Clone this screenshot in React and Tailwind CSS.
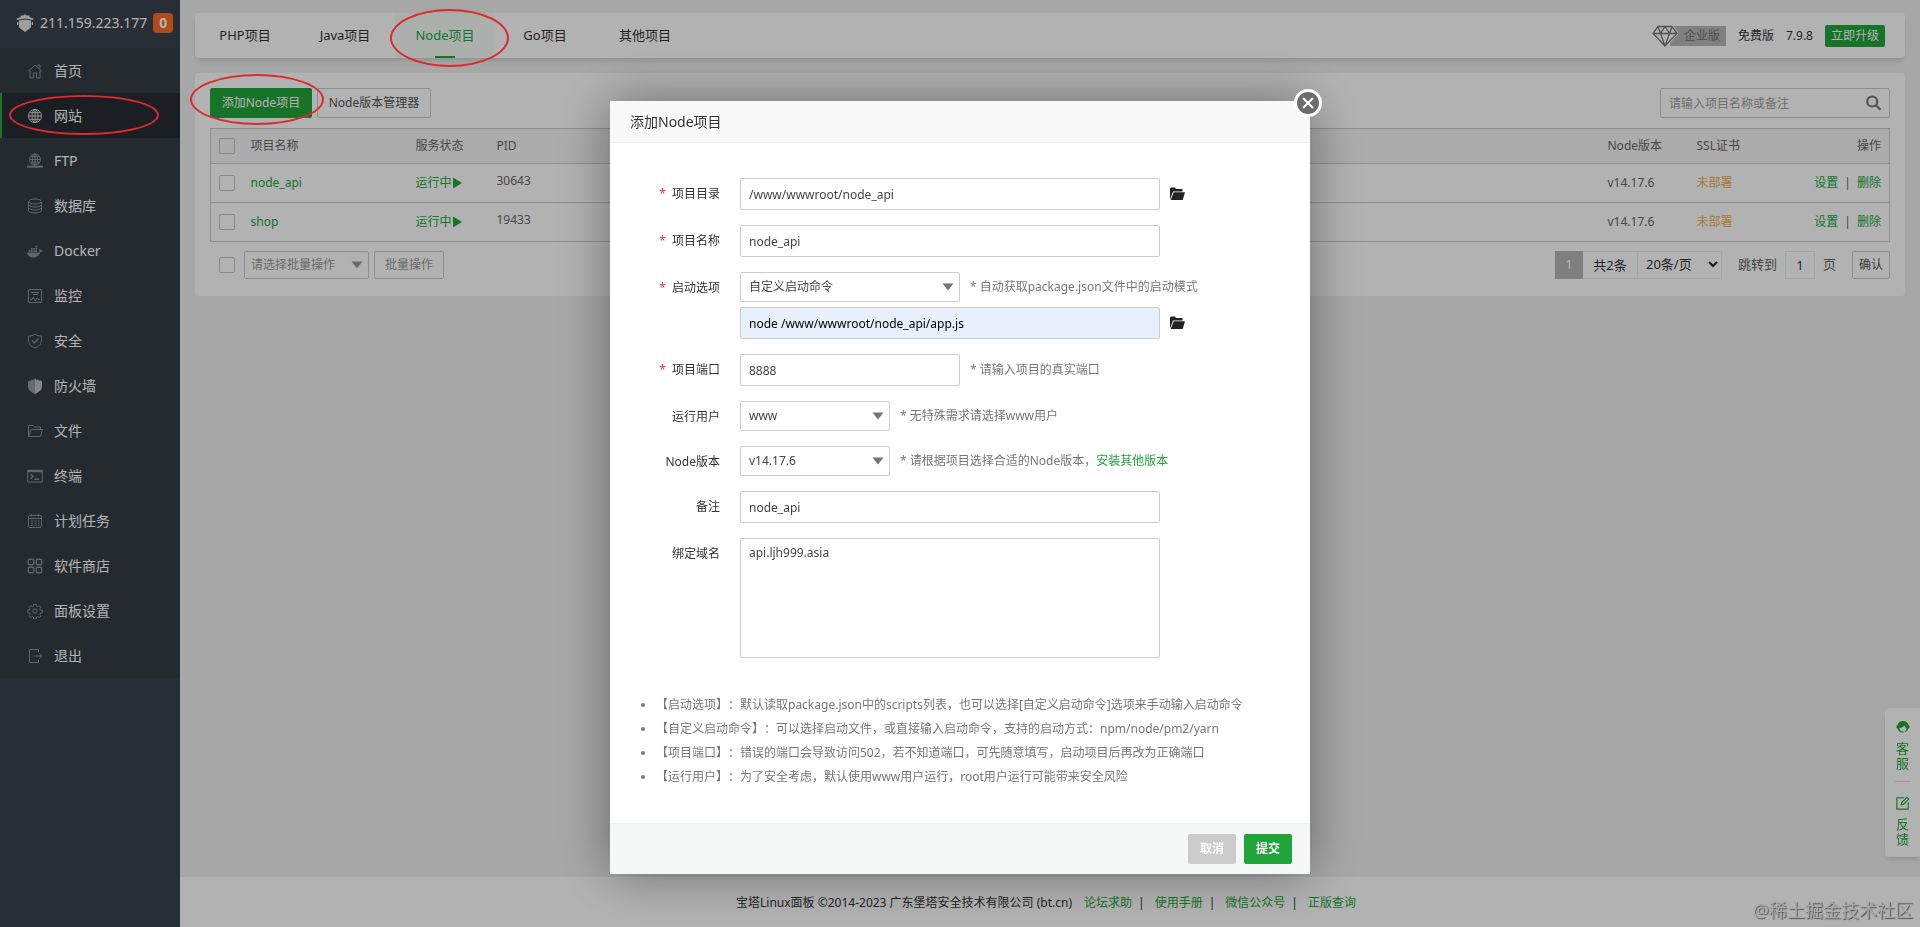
import React from "react";

const menu = [
  { name: "首页", icon: "home" },
  { name: "网站", icon: "globe", active: true },
  { name: "FTP", icon: "ftp" },
  { name: "数据库", icon: "database" },
  { name: "Docker", icon: "docker" },
  { name: "监控", icon: "monitor" },
  { name: "安全", icon: "safe" },
  { name: "防火墙", icon: "firewall" },
  { name: "文件", icon: "folder" },
  { name: "终端", icon: "terminal" },
  { name: "计划任务", icon: "calendar" },
  { name: "软件商店", icon: "apps" },
  { name: "面板设置", icon: "gear" },
  { name: "退出", icon: "logout" }
];

const tabs = ["PHP项目", "Java项目", "Node项目", "Go项目", "其他项目"];

const projects = [
  { name: "node_api", pid: "30643", version: "v14.17.6" },
  { name: "shop", pid: "19433", version: "v14.17.6" }
];

const tips = [
  "【启动选项】：默认读取package.json中的scripts列表，也可以选择[自定义启动命令]选项来手动输入启动命令",
  "【自定义启动命令】：可以选择启动文件，或直接输入启动命令，支持的启动方式：npm/node/pm2/yarn",
  "【项目端口】：错误的端口会导致访问502，若不知道端口，可先随意填写，启动项目后再改为正确端口",
  "【运行用户】：为了安全考虑，默认使用www用户运行，root用户运行可能带来安全风险"
];

const links = ["论坛求助", "使用手册", "微信公众号", "正版查询"];

const menuIcons = {
  home: <path d="M1 8.500 8 2l7 6.500M3 7.500v7.500h3.500v-5h3v5H13V7.500M11 3.500V2h2v3.500" />,
  globe: (
    <>
      <circle cx="8" cy="8" r="6.500" />
      <ellipse cx="8" cy="8" rx="3" ry="6.500" />
      <path d="M8 1.500v13M1.500 8h13M2.500 4.700h11M2.500 11.300h11" />
    </>
  ),
  ftp: (
    <>
      <circle cx="8" cy="6.500" r="5.500" />
      <ellipse cx="8" cy="6.500" rx="2.500" ry="5.500" />
      <path d="M8 1v11M2.500 6.500h11M3.500 3.700h9M3.500 9.300h9" />
      <path strokeWidth="2" d="M0 13.700h16" />
    </>
  ),
  database: (
    <>
      <ellipse cx="8" cy="3.500" rx="6.500" ry="2.500" />
      <path d="M1.500 3.500v9c0 3.300 13 3.300 13 0v-9M1.500 6.500c0 3.300 13 3.300 13 0M1.500 9.500c0 3.300 13 3.300 13 0" />
    </>
  ),
  docker: (
    <path
      fill="currentColor"
      stroke="none"
      d="M1.500 7.300h1.700V9H1.500zM3.800 7.300h1.700V9H3.800zM6.100 7.300h1.700V9H6.100zM8.400 7.300h1.700V9H8.400zM3.800 5h1.700v1.700H3.800zM6.100 5h1.700v1.700H6.100zM8.400 5h1.700v1.700H8.400zM8.400 2.700h1.700v1.700H8.400zM.3 9.600H11c1 0 1.500-.5 1.500-1.500-.5-1-.3-2 .3-2.700.7.500 1 1.200 1 2 .8-.2 1.600 0 2.200.4-.5 1-1.500 1.300-2.600 1.300C12.400 12.500 10 14.500 6 14.500 2.300 14.500.3 12.500.3 9.600z"
    />
  ),
  monitor: (
    <>
      <path d="M1.500 1.500h13v13h-13zM4 4.500h8M6 6.500h5" />
      <path d="M3 11.500h2l1.300-2.500 2 4 1.700-3 1 1.500h2" />
    </>
  ),
  safe: (
    <>
      <path d="M8 1C6 2.700 4 3 1.500 3v5c0 3.500 3.500 6 6.500 7 3-1 6.500-3.500 6.500-7V3C12 3 10 2.700 8 1z" />
      <path strokeWidth="1.300" d="m4.800 7.500 2.500 2.500 4.200-4.500" />
    </>
  ),
  firewall: (
    <>
      <path fill="#94989c" stroke="none" d="M8 0 6.500 2.300 5 1.300 3.700 3 2.500 2.200 1 3.500V9c0 3 4 5.500 7 7z" />
      <path fill="#bfc1c3" stroke="none" d="m8 0 1.500 2.300 1.500-1L12.300 3l1.200-.8L15 3.500V9c0 3-4 5.500-7 7z" />
    </>
  ),
  folder: <path d="M1.500 13.500v-11h4.500l1.500 1.500h6v2.500M1.500 13.500l2.500-7h11.500l-2 7z" />,
  terminal: (
    <>
      <path d="M.7 2.500h14.600v11.500H.7z" />
      <path strokeWidth="2.500" d="M.7 3h14.600" />
      <path strokeWidth="1.400" d="m3.500 6.300 2.700 2.200-2.700 2.200M7.500 11.200h4.500" />
    </>
  ),
  calendar: (
    <>
      <rect x="1.500" y="2.500" width="13" height="12" rx="1.500" />
      <path d="M1.500 5.500h13M4.500 1v2.500M11.500 1v2.500" />
      <path strokeDasharray="2 1.500" d="M4 8h8.500M4 10.200h8.500M4 12.400h8.500" />
    </>
  ),
  apps: (
    <g strokeWidth="1.400">
      <rect x="1.300" y="1.300" width="5.400" height="5.400" rx="1.200" />
      <rect x="9.300" y="1.300" width="5.400" height="5.400" rx="1.200" />
      <rect x="1.300" y="9.300" width="5.400" height="5.400" rx="1.200" />
      <rect x="9.300" y="9.300" width="5.400" height="5.400" rx="1.200" />
    </g>
  ),
  gear: (
    <>
      <circle cx="8" cy="8" r="2.200" />
      <path d="M6.800 1.300h2.400l.4 1.900 1.100.5 1.600-1.100 1.700 1.700-1.100 1.600.5 1.100 1.900.4v2.400l-1.900.4-.5 1.100 1.100 1.600-1.700 1.700-1.600-1.100-1.100.5-.4 1.900H6.800l-.4-1.900-1.100-.5-1.600 1.100L2 12.900l1.100-1.600-.5-1.100-1.900-.4V7.400L2.600 7l.5-1.100L2 4.300l1.700-1.700 1.600 1.100 1.100-.5z" />
    </>
  ),
  logout: <path d="M11.500 4.500v-3h-9v13h9v-3M6.500 8h8.500M12.500 5.500 15 8l-2.500 2.500" />
};

const FolderOpen = () => (
  <svg viewBox="0 0 16 16" className="h-4 w-4" fill="#222">
    <path d="M0 13.500V2.500L1 1.500h4l1 1.500h6.500v2.500H3z" />
    <path d="M3.700 6.300H15L12.700 14H.7z" />
  </svg>
);

const Caret = ({ className = "text-[#757575]" }) => (
  <svg viewBox="0 0 12 8" className={`pointer-events-none absolute right-1.5 top-1/2 h-2 w-3 -translate-y-1/2 ${className}`}>
    <path fill="currentColor" d="M.5.500h11L6 7.500z" />
  </svg>
);

const Check = ({ label }) => (
  <input type="checkbox" aria-label={label} className="block h-4 w-4 appearance-none rounded-xs border border-[#c4c4c4]" />
);

const Field = ({ id, label, required, children }) => (
  <div className="flex items-start">
    <label htmlFor={id} className="w-[110px] shrink-0 pr-5 text-right leading-8 text-[#333]">
      {required && <span className="mr-1.5 text-[#e8344a]">*</span>}
      {label}
    </label>
    <div className="min-w-0 flex-1">{children}</div>
  </div>
);

const inputStyle = "h-8 rounded-xs border border-[#ccc] bg-white px-2 text-[#444] outline-none";

const Select = ({ id, value, className }) => (
  <div className={`relative ${className}`}>
    <select id={id} className="h-[30px] w-full appearance-none rounded-xs border border-[#ccc] bg-white px-2 text-[#444]">
      <option>{value}</option>
    </select>
    <Caret />
  </div>
);

const Sidebar = () => (
  <aside className="w-[180px] shrink-0 bg-[#3c424e] text-sm text-white">
    <div className="flex h-12 items-center pb-0.5 pl-4">
      <svg viewBox="0 0 18 18" className="mr-1.5 h-[18px] w-[18px]" fill="#e4e4e4">
        <path d="M9 0 10 1.300 14 1.800 13 3 17.500 4.500 17 6 9 4.500 1 6 .5 4.500 5 3 4 1.800l4-.5z" />
        <path d="M3 6.500 9 5.500l6 1v7L9 18l-6-4.500z" />
        <path d="M1 8h1.300v3H1zM15.700 8H17v3h-1.300z" />
      </svg>
      <span>211.159.223.177</span>
      <span className="ml-1.5 flex h-5 w-5 items-center justify-center rounded bg-[#fc6d26] font-bold">0</span>
    </div>
    <nav className="bg-[#363d44]">
      {menu.map((item) => (
        <a
          key={item.name}
          href="#"
          className={`flex h-[45px] items-center border-l-2 pl-[25px] ${
            item.active ? "border-[#20a53a] bg-[#282c33]" : "border-transparent"
          }`}
        >
          <svg
            viewBox="0 0 16 16"
            className={`mr-[11px] h-4 w-4 ${item.active ? "text-[#d4d6d8]" : "text-[#8d9296]"}`}
            fill="none"
            stroke="currentColor"
          >
            {menuIcons[item.icon]}
          </svg>
          {item.name}
        </a>
      ))}
    </nav>
  </aside>
);

const TopBar = () => (
  <header className="flex h-[45px] items-center justify-between rounded bg-white pr-5 shadow-md">
    <nav className="flex h-full text-[13px]">
      {tabs.map((tab) => (
        <a
          key={tab}
          href="#"
          className={`relative flex w-[100px] items-center justify-center ${
            tab === "Node项目" ? "bg-[#f7fcf8] text-[#20a53a]" : "text-[#333]"
          }`}
        >
          {tab}
          {tab === "Node项目" && <span className="absolute bottom-0 h-0.5 w-5 bg-[#20a53a]" />}
        </a>
      ))}
    </nav>
    <div className="flex items-center text-[#333]">
      <svg viewBox="0 0 26 22" className="relative -mr-2 h-[22px] w-[26px]" fill="none" stroke="#777" strokeWidth="1.300">
        <path fill="#fff" stroke="#fff" strokeWidth="3" d="M6 1.500h14l5 7L13 21 1 8.500z" />
        <path d="M6 1.500h14l5 7L13 21 1 8.500zM1 8.500h24M6 1.500l2.500 7L13 21l4.500-12.500 2.500-7M8.500 8.500 13 1.500l4.500 7" />
      </svg>
      <span className="bg-[#b8b8b8] pl-3.5 pr-1.5 leading-5 text-[#707070]">企业版</span>
      <span className="ml-3">免费版</span>
      <span className="ml-3">7.9.8</span>
      <button className="ml-3 h-[22px] rounded-xs bg-[#20a53a] px-1.5 text-white">立即升级</button>
    </div>
  </header>
);

const ProjectTable = () => (
  <table className="mt-2.5 w-full table-fixed border border-[#ccc] text-left text-[#666]">
    <thead>
      <tr className="h-[35px] border-b border-[#ccc] bg-[#f6f6f6]">
        <th className="w-10 pl-2"><Check label="全选" /></th>
        <th className="w-[165px] font-normal">项目名称</th>
        <th className="w-[81px] font-normal">服务状态</th>
        <th className="font-normal">PID</th>
        <th className="w-[89px] font-normal">Node版本</th>
        <th className="w-[90px] font-normal">SSL证书</th>
        <th className="w-[103px] pr-2 text-right font-normal">操作</th>
      </tr>
    </thead>
    <tbody>
      {projects.map((item) => (
        <tr key={item.name} className="h-[39px] border-b border-[#ccc]">
          <td className="pl-2"><Check label={item.name} /></td>
          <td><a href="#" className="text-[#20a53a]">{item.name}</a></td>
          <td>
            <a href="#" className="flex items-center text-[#20a53a]">
              运行中
              <svg viewBox="0 0 10 12" className="h-3 w-2.5" fill="currentColor"><path d="M1 .5 10 6l-9 5.500z" /></svg>
            </a>
          </td>
          <td className="pb-1">{item.pid}</td>
          <td>{item.version}</td>
          <td><a href="#" className="text-[#f0ad4e]">未部署</a></td>
          <td className="pr-2 text-right">
            <a href="#" className="text-[#20a53a]">设置</a>
            <span className="mx-1.5">|</span>
            <a href="#" className="text-[#20a53a]">删除</a>
          </td>
        </tr>
      ))}
    </tbody>
  </table>
);

const TableFooter = () => (
  <div className="mt-[9px] flex items-center justify-between">
    <div className="flex items-center pl-[9px]">
      <Check label="选择全部项目" />
      <div className="relative ml-[9px] w-[125px]">
        <select aria-label="批量操作" className="h-7 w-full appearance-none rounded-xs border border-[#ccc] px-1.5 text-[#999]">
          <option>请选择批量操作</option>
        </select>
        <Caret className="text-[#999]" />
      </div>
      <button className="ml-[5px] h-7 w-[70px] rounded-xs border border-[#ccc] text-[#999]">批量操作</button>
    </div>
    <div className="flex items-center text-[13px] text-[#333]">
      <button className="h-7 w-7 bg-[#b6b6b6] text-white">1</button>
      <span className="w-[55px] border-y border-r border-[#ececec] text-center leading-[26px]">共2条</span>
      <div className="relative w-[84px]">
        <select aria-label="每页条数" className="h-7 w-full appearance-none border-y border-r border-[#ececec] pl-2 text-[#333]">
          <option>20条/页</option>
        </select>
        <svg viewBox="0 0 10 7" className="pointer-events-none absolute right-1 top-2.5 h-[7px] w-2.5" fill="none" stroke="#222" strokeWidth="2">
          <path d="m1 1 4 4 4-4" />
        </svg>
      </div>
      <label htmlFor="page" className="ml-4 text-[#666]">跳转到</label>
      <input id="page" defaultValue="1" className="mx-2 h-7 w-[30px] border border-[#ececec] text-center" />
      <span className="text-[#666]">页</span>
      <button className="ml-4 h-7 w-[38px] rounded-xs border border-[#ccc] text-xs text-[#555]">确认</button>
    </div>
  </div>
);

const AddProjectDialog = () => (
  <div role="dialog" aria-label="添加Node项目" className="relative w-[700px] bg-white shadow-[0_0_50px_rgba(0,0,0,0.4)]">
    <button aria-label="关闭" className="absolute -right-3 -top-3 flex h-7 w-7 items-center justify-center rounded-full border-3 border-white bg-[#6c6c6c]">
      <svg viewBox="0 0 12 12" className="h-3 w-3" stroke="#fff" strokeWidth="2"><path d="m1 1 10 10M11 1 1 11" /></svg>
    </button>
    <h2 className="h-[42px] border-b border-[#eee] bg-[#f8f8f8] pl-5 text-sm leading-[41px] text-[#333]">添加Node项目</h2>
    <form className="flex flex-col gap-[15px] pl-5 pt-[35px]">
      <Field id="path" label="项目目录" required>
        <div className="flex items-center gap-2.5">
          <input id="path" defaultValue="/www/wwwroot/node_api" className={`${inputStyle} w-[420px]`} />
          <button type="button" aria-label="选择目录"><FolderOpen /></button>
        </div>
      </Field>
      <Field id="name" label="项目名称" required>
        <input id="name" defaultValue="node_api" className={`${inputStyle} block w-[420px]`} />
      </Field>
      <Field id="script" label="启动选项" required>
        <div className="flex items-center gap-2.5">
          <Select id="script" value="自定义启动命令" className="w-[220px]" />
          <span className="text-[#777]">* 自动获取package.json文件中的启动模式</span>
        </div>
        <div className="mt-[5px] flex items-center gap-2.5">
          <input aria-label="启动命令" defaultValue="node /www/wwwroot/node_api/app.js" className="h-8 w-[420px] rounded-xs border border-[#ccc] bg-[#e8f0fe] px-2 text-black outline-none" />
          <button type="button" aria-label="选择启动文件"><FolderOpen /></button>
        </div>
      </Field>
      <Field id="port" label="项目端口" required>
        <div className="flex items-center gap-2.5">
          <input id="port" defaultValue="8888" className={`${inputStyle} w-[220px]`} />
          <span className="text-[#777]">* 请输入项目的真实端口</span>
        </div>
      </Field>
      <div className="flex flex-col gap-[13px]">
        <Field id="user" label="运行用户">
          <div className="flex items-center gap-2.5">
            <Select id="user" value="www" className="w-[150px]" />
            <span className="text-[#777]">* 无特殊需求请选择www用户</span>
          </div>
        </Field>
        <Field id="version" label="Node版本">
          <div className="flex items-center gap-2.5">
            <Select id="version" value="v14.17.6" className="w-[150px]" />
            <span className="text-[#777]">
              * 请根据项目选择合适的Node版本，<a href="#" className="text-[#20a53a]">安装其他版本</a>
            </span>
          </div>
        </Field>
        <Field id="remark" label="备注">
          <input id="remark" defaultValue="node_api" className={`${inputStyle} block w-[420px]`} />
        </Field>
      </div>
      <Field id="domains" label="绑定域名">
        <textarea id="domains" defaultValue="api.ljh999.asia" className="block h-[120px] w-[420px] resize-none rounded-xs border border-[#ccc] px-2 py-1 leading-5 text-[#444] outline-none" />
      </Field>
    </form>
    <ul className="mb-[34px] ml-[46px] mt-[35px] list-disc leading-6 text-[#777] [text-spacing-trim:space-all]">
      {tips.map((tip) => (
        <li key={tip}>{tip}</li>
      ))}
    </ul>
    <div className="flex justify-end gap-2 border-t border-[#edf1f2] bg-[#f6f8f8] py-2.5 pr-[18px] font-bold text-white">
      <button className="h-[30px] w-12 rounded-xs bg-[#cbcbcb]">取消</button>
      <button className="h-[30px] w-12 rounded-xs bg-[#20a53a]">提交</button>
    </div>
  </div>
);

const App = () => {
  return (
    <div className="relative flex min-h-screen bg-[#f0f0f1] font-['Noto_Sans','Noto_Sans_CJK_SC',sans-serif] text-xs">
      <Sidebar />
      <div className="flex min-w-0 flex-1 flex-col">
        <main className="flex-1 px-[15px] pt-[13px]">
          <TopBar />
          <section className="mt-[15px] rounded bg-white px-[15px] pb-[17px] pt-[15px]">
            <div className="flex items-center justify-between">
              <div className="flex gap-[5px]">
                <button className="h-[30px] w-[102px] rounded-xs bg-[#20a53a] text-white">添加Node项目</button>
                <button className="h-[30px] w-[114px] rounded-xs border border-[#ccc] text-[#555]">Node版本管理器</button>
              </div>
              <div className="relative">
                <input aria-label="搜索" placeholder="请输入项目名称或备注" className="h-[30px] w-[230px] rounded-xs border border-[#ccc] px-2 placeholder:text-[#a0a0a0]" />
                <svg viewBox="0 0 16 16" className="absolute right-2 top-[7px] h-4 w-4" fill="none" stroke="#777" strokeWidth="2.200">
                  <circle cx="6.200" cy="6.500" r="5" />
                  <path d="m10 10.300 4.500 4.500" />
                </svg>
              </div>
            </div>
            <ProjectTable />
            <TableFooter />
          </section>
        </main>
        <footer className="flex h-[50px] items-center justify-center bg-white pr-2 pt-0.5 text-[#333]">
          <span className="mr-3">宝塔Linux面板 ©2014-2023 广东堡塔安全技术有限公司 (bt.cn)</span>
          {links.map((link, index) => (
            <React.Fragment key={link}>
              {index > 0 && <span className="ml-1.5 mr-2.5">|</span>}
              <a href="#" className="text-[#20a53a]">{link}</a>
            </React.Fragment>
          ))}
        </footer>
      </div>

      <div className="fixed bottom-[70px] right-0 flex w-[35px] flex-col items-center rounded-l bg-white pb-2.5 pt-3 text-[13px] leading-[15px] text-[#20a53a] shadow-md">
        <a href="#" className="flex w-4 flex-col items-center pb-2.5 text-center">
          <svg viewBox="0 0 16 16" className="mb-[7px] h-3.5 w-3.5" fill="currentColor">
            <path d="M8 1C4.500 1 2 3.300 1.700 6 .7 6.200.5 7 .5 8s.4 1.900 1.500 2c.6 2.300 2 3.700 4 4.300h2.500c.8 0 .8-1.300 0-1.300H6.500C5 12.500 4 11 4 9c2.500-.3 4.500-1.300 5.500-2.800.6 1.300 1.500 2.300 2.500 2.800 0 1.500-.7 3-2 4v1c2-.7 3.300-2 4-4 1.100-.1 1.500-1 1.500-2s-.2-1.800-1.200-2C14 3.300 11.500 1 8 1z" />
          </svg>
          客服
        </a>
        <a href="#" className="flex w-4 flex-col items-center border-t border-[#ddd] pt-3.5 text-center">
          <svg viewBox="0 0 16 16" className="mb-[7px] h-3.5 w-3.5" fill="none" stroke="currentColor" strokeWidth="1.300">
            <path d="M9 2H1v13h13V7.500M6 10l.7-2.700L12.500 1.500l2 2L8.700 9.300z" />
          </svg>
          反馈
        </a>
      </div>

      <div className="fixed inset-0 flex items-start justify-center bg-black/30 pt-[101px]">
        <AddProjectDialog />
      </div>

      {/* hand drawn marks and watermark */}
      <div className="pointer-events-none absolute left-[9px] top-[95px] h-10 w-[150px] rounded-[50%] border-2 border-[#dc2a2e]" />
      <div className="pointer-events-none absolute left-[390px] top-[9px] h-[58px] w-[119px] rounded-[50%] border-2 border-[#dc2a2e]" />
      <div className="pointer-events-none absolute left-[190px] top-[74px] h-[51px] w-[134px] rounded-[50%] border-2 border-[#dc2a2e]" />
      <div className="pointer-events-none absolute bottom-1 right-[7px] text-lg leading-[26px] text-[#aaa] [text-shadow:1px_1px_1px_#555]">@稀土掘金技术社区</div>
    </div>
  );
};

export default App;
